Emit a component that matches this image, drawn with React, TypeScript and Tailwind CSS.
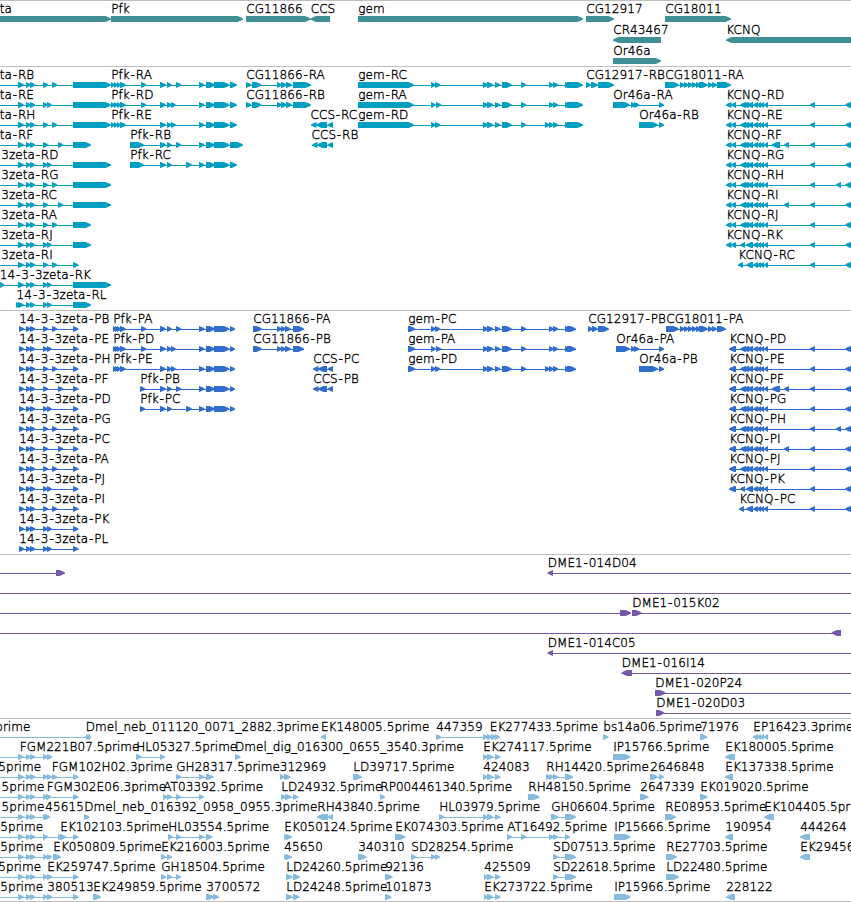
import React from 'react';

interface Feature {
    label?: string;
    labelX: number;
    exons: number[][];
    from: number;
    to: number;
    reverse: boolean;
}

interface FeatureOptions {
    at?: number;
    from?: number;
    to?: number;
}

interface Track {
    name: string;
    className: string;
    rowClassName: string;
    rowHeight: number;
    rows: Feature[][];
}

// exons are written as "start-end start-end ..."
function build(label: string, exons: string, reverse: boolean, opts: FeatureOptions): Feature {
    const parsed = exons ? exons.split(' ').map((e) => e.split('-').map(Number)) : [];
    const from = opts.from ?? parsed[0][0];
    const to = opts.to ?? parsed[parsed.length - 1][1];
    return { label, labelX: opts.at ?? from, exons: parsed, from, to, reverse };
}

const fwd = (label: string, exons: string, opts: FeatureOptions = {}) => build(label, exons, false, opts);
const rev = (label: string, exons: string, opts: FeatureOptions = {}) => build(label, exons, true, opts);

const EDGE = 860;

/* shared exon groups */
const Z = '18-24 26-31 30-35.5';
const ZP = '19-24.5 26-31 30-35.5';
const PFK_END = '199-204.7 206-215 214-229.5';
const GEM_MID = '483-488.5 487-493.5 495-500.5 502-512 521-526.5';
const K = '740-746 743-749 747-753 753-758 757-761 760-764 764-768';
const K_SHORT = '746-753 753-758 757-761 760-764 764-768';
const K_END = '809.7-815 845-851';
const CG18 = '680-685 684-689 688-693 692-697 696-701 699-708 708-713 712-717';

const zeta = (label: string, at: number, exons: string) => fwd(label, `${Z} ${exons}`, { at, from: -5 });
const zetaP = (label: string, exons: string) => fwd(label, `${ZP} ${exons} 73-78.5`, { at: 19 });
const kcnq = (label: string, exons: string) => rev(label, exons, { to: EDGE });

const geneRows: Feature[][] = [
    [
        fwd('ta', '0-111', { at: -0.5 }),
        fwd('Pfk', '111-243'),
        fwd('CG11866', '246-310.5'),
        rev('CCS', '310.5-330'),
        fwd('gem', '358-583'),
        fwd('CG12917', '586-614'),
        fwd('CG18011', '665-731'),
    ],
    [rev('CR43467', '613-661'), rev('KCNQ', '726-860')],
    [fwd('Or46a', '613-661')],
];

const transcriptRows: Feature[][] = [
    [
        zeta('ta-RB', -0.5, '43-48.5 52-57.5 73-111'),
        fwd('Pfk-RA', `111-115 114-118 117-121 120-126 141-146.5 160-166 167-172 176-181.5 ${PFK_END} 230-237`),
        fwd('CG11866-RA', '246-251.5 252-261.5 277-282 281-287 286-292 293-311'),
        fwd('gem-RC', `358-414 431-436 435-440.5 ${GEM_MID} 549-554 553-558.5 565-570 567-583`),
        fwd('CG12917-RB', '586-591.5 591-598 598-614'),
        fwd('CG18011-RA', `665-679 ${CG18} 717-731`),
    ],
    [
        zeta('ta-RE', -0.5, '43-48 47-52 73-111'),
        fwd('Pfk-RD', `111-115 114-118 117-121 120-126 141-146.5 160-166 167-172 171-176 ${PFK_END} 230-237`),
        fwd('CG11866-RB', '246-251.5 252-261.5 277-282 281-287 286-292 293-311'),
        fwd('gem-RA', `358-414 431-436 436-441.5 ${GEM_MID} 549-554 553-558.5 565-570 567-583`),
        fwd('Or46a-RA', '613-630 631-636 634-639.5 659-664'),
        kcnq('KCNQ-RD', `726-731.5 731-736 ${K} ${K_END}`),
    ],
    [
        zeta('ta-RH', -0.5, '43-48.5 52-57.5 73-111'),
        fwd('Pfk-RE', `111-115 114-118 117-121 120-126 160-166 167-172 171-176 ${PFK_END} 230-237`),
        rev('CCS-RC', '311-316.5 316-327 327.5-333', { at: 310.3 }),
        fwd('gem-RD', `358-414 431-436 435-440.5 ${GEM_MID} 545-550 549-554 553-558.5 565-570 567-583`),
        fwd('Or46a-RB', '639-658 659-664'),
        kcnq('KCNQ-RE', `726-731.5 731-736 ${K} ${K_END}`),
    ],
    [
        zeta('ta-RF', -0.5, '43-48.5 58-63.5 73-91'),
        fwd('Pfk-RB', `130-144 160-166 167-172 176-181.5 ${PFK_END} 230-243`),
        rev('CCS-RB', '312-317.5 317-327 327.5-333', { at: 311.3 }),
        kcnq('KCNQ-RF', `726-731.5 731-736 ${K} 771.5-780 783.7-789 ${K_END}`),
    ],
    [
        zeta('3zeta-RD', 1, '43-48 47-52 73-111'),
        fwd('Pfk-RC', `130-144 160-166 167-172 186-192 ${PFK_END} 230-237`),
        kcnq('KCNQ-RG', `726-731.5 731-736 ${K} ${K_END}`),
    ],
    [
        zeta('3zeta-RG', 1, '43-48.5 52-57.5 73-111'),
        kcnq('KCNQ-RH', `726-731.5 731-736 ${K} 809.7-815 835.7-841 845-851`),
    ],
    [
        zeta('3zeta-RC', 1, '43-48.5 58-63.5 73-111'),
        kcnq('KCNQ-RI', `726-731.5 731-736 ${K} 783.7-789 ${K_END}`),
    ],
    [zeta('3zeta-RA', 1, '43-48.5 52-57.5 73-91'), kcnq('KCNQ-RJ', `726-731.5 731-736 ${K} ${K_END}`)],
    [
        zeta('3zeta-RJ', 1, '43-48 47-52 73-91'),
        kcnq('KCNQ-RK', `726-731.5 731-736 740-745 ${K_SHORT} ${K_END}`),
    ],
    [zeta('3zeta-RI', 1, '43-48.5 52-57.5 73-78.5'), kcnq('KCNQ-RC', `738-743 ${K_SHORT} ${K_END}`)],
    [fwd('14-3-3zeta-RK', `0-4.5 ${Z} 43-48 47-52 73-111`, { at: -0.5 })],
    [fwd('14-3-3zeta-RL', '16-20 18-24 26-31 30-35.5 43-48 47-52 73-91', { at: 16.3 })],
];

const cdsRows: Feature[][] = [
    [
        zetaP('14-3-3zeta-PB', '43-48.5 52-57.5'),
        fwd('Pfk-PA', `113-117 115-119 117-121 120-126 141-146.5 160-166 167-172 176-181.5 ${PFK_END} 230-235`),
        fwd('CG11866-PA', '253-262 277-282 281-286 285-291 293-304'),
        fwd('gem-PC', `408-415.5 431-436 435-440.5 ${GEM_MID} 549-554 553-558.5 565-570 567-576`),
        fwd('CG12917-PB', '588-593 592-598 598-609'),
        fwd('CG18011-PA', `666-679 ${CG18} 717-726`),
    ],
    [
        zetaP('14-3-3zeta-PE', '43-48 47-52'),
        fwd('Pfk-PD', `113-117 115-119 117-121 120-126 141-146.5 160-166 167-172 171-176 ${PFK_END} 230-235`),
        fwd('CG11866-PB', '253-262 277-282 281-286 285-291 293-304'),
        fwd('gem-PA', `408-415.5 431-436 436-441.5 ${GEM_MID} 549-554 553-558.5 565-570 567-576`),
        fwd('Or46a-PA', '616-630 631-636 634-639.5 659-664'),
        kcnq('KCNQ-PD', `729-736 ${K} ${K_END}`),
    ],
    [
        zetaP('14-3-3zeta-PH', '43-48.5 52-57.5'),
        fwd('Pfk-PE', `113-117 115-119 117-121 120-126 160-166 167-172 171-176 ${PFK_END} 230-235`),
        rev('CCS-PC', '313-318.5 318-327 327.5-333'),
        fwd('gem-PD', `408-415.5 431-436 435-440.5 ${GEM_MID} 545-550 549-554 553-558.5 565-570 567-576`),
        fwd('Or46a-PB', '639-658 659-664'),
        kcnq('KCNQ-PE', `729-736 ${K} ${K_END}`),
    ],
    [
        zetaP('14-3-3zeta-PF', '43-48.5 58-63.5'),
        fwd('Pfk-PB', `140-145.5 160-166 167-172 176-181.5 ${PFK_END} 230-235`),
        rev('CCS-PB', '313-318.5 318-327 327.5-333'),
        kcnq('KCNQ-PF', `729-736 ${K} 771.5-780 783.7-789 ${K_END}`),
    ],
    [
        zetaP('14-3-3zeta-PD', '43-48 47-52'),
        fwd('Pfk-PC', `140-145.5 160-166 167-172 186-192 ${PFK_END} 230-235`),
        kcnq('KCNQ-PG', `729-736 ${K} ${K_END}`),
    ],
    [zetaP('14-3-3zeta-PG', '43-48.5 52-57.5'), kcnq('KCNQ-PH', `729-736 ${K} 809.7-815 835.7-841 845-851`)],
    [zetaP('14-3-3zeta-PC', '43-48.5 58-63.5'), kcnq('KCNQ-PI', `729-736 ${K} 783.7-789 ${K_END}`)],
    [zetaP('14-3-3zeta-PA', '43-48.5 52-57.5'), kcnq('KCNQ-PJ', `729-736 ${K} ${K_END}`)],
    [zetaP('14-3-3zeta-PJ', '43-48 47-52'), kcnq('KCNQ-PK', `729-736 740-745 ${K_SHORT} ${K_END}`)],
    [zetaP('14-3-3zeta-PI', '43-48.5 52-57.5'), kcnq('KCNQ-PC', `739-744 ${K_SHORT} ${K_END}`)],
    [zetaP('14-3-3zeta-PK', '43-48 47-52')],
    [zetaP('14-3-3zeta-PL', '43-48 47-52')],
];

const cloneRows: Feature[][] = [
    [fwd('', '56-65', { from: -5 }), rev('DME1-014D04', '547.5-553', { to: EDGE })],
    [fwd('', '', { from: -5, to: EDGE })],
    [fwd('', '620-631', { from: -5 }), fwd('DME1-015K02', '632-641.5', { to: EDGE })],
    [rev('', '831.5-841', { from: -5 })],
    [rev('DME1-014C05', '547.5-553', { to: EDGE })],
    [rev('DME1-016I14', '621.5-632', { to: EDGE })],
    [fwd('DME1-020P24', '655-665.5', { to: EDGE })],
    [fwd('DME1-020D03', '656-664.5', { to: EDGE })],
];

const estRows: Feature[][] = [
    [
        fwd('prime', '86-91', { at: -5, from: -5 }),
        rev('Dmel_neb_011120_0071_2882.3prime', '85-90', { at: 85.5 }),
        rev('EK148005.5prime', '320.7-326'),
        fwd('447359', '436-441.5 483-488 487-492 491-496 495-500', { at: 436 }),
        fwd('EK277433.5prime', '491-496', { at: 489.5 }),
        fwd('bs14a06.5prime', '603-608.5'),
        fwd('71976', '700-707.5'),
        rev('EP16423.3prime', '753-758 757-761 760-764 764-768'),
    ],
    [
        zeta('', 0, '43-48 47-52'),
        fwd('FGM221B07.5prime', '47-52', { at: 19.5 }),
        fwd('HL05327.5prime', '136-142 160-165'),
        fwd('Dmel_dig_016300_0655_3540.3prime', '235-240.5', { at: 234.8 }),
        fwd('EK274117.5prime', '483-488 487-493.5 495-500.5'),
        fwd('IP15766.5prime', '613-630.5'),
        rev('EK180005.5prime', '725-735'),
    ],
    [
        zeta('5prime', -2, '43-48 47-52 73-78.5'),
        fwd('FGM102H02.3prime', '52-57.5', { at: 51.5 }),
        fwd('GH28317.5prime', '176-181.5 199-204.5 206-213.5'),
        fwd('312969', '280-285 284-290.5', { at: 279.5 }),
        fwd('LD39717.5prime', '353-362'),
        fwd('424083', '483-488 487-493.5 495-500.5'),
        fwd('RH14420.5prime', '546-551 549-554 553-558.5 565-573'),
        fwd('2646848', '650-658 659-664'),
        rev('EK137338.5prime', '725-733'),
    ],
    [
        zeta('5prime', 1.3, '43-48 46-51 73-78.5'),
        fwd('FGM302E06.3prime', '47-51', { at: 46.5 }),
        fwd('AT03392.5prime', '163-168 167-172 176-181.5 199-204'),
        fwd('LD24932.5prime', '281-286 285-291.5 293-298.5'),
        fwd('RP004461340.5prime', '380-385'),
        fwd('RH48150.5prime', '528-539.5'),
        fwd('2647339', '640-648.5'),
        fwd('EK019020.5prime', '700-707.5'),
    ],
    [
        zeta('5prime', 1.3, '43-48 45-50'),
        fwd('45615', '45-50'),
        fwd('Dmel_neb_016392_0958_0955.3prime', '84-89.5', { at: 84 }),
        rev('RH43840.5prime', '317-328 327.5-333'),
        fwd('HL03979.5prime', '439-444.5 483-488 487-493.5 495-500.5'),
        fwd('GH06604.5prime', '551-558.5 565-576'),
        fwd('RE08953.5prime', '665-676'),
        rev('EK104405.5prime', '764-774'),
    ],
    [
        zeta('5prime', 0, '43-48.5 58-63 60-66 73-78.5'),
        fwd('EK102103.5prime', '60-66'),
        fwd('HL03554.5prime', '168-173 176-181.5 199-204 206-212.5'),
        fwd('EK050124.5prime', '284-288 286-292'),
        fwd('EK074303.5prime', '395-405.5'),
        fwd('AT16492.5prime', '507-512.5 521-526.5 549-554 553-558.5 565-570'),
        fwd('IP15666.5prime', '614-630.5'),
        rev('190954', '725-733', { at: 725 }),
        rev('444264', '800-810'),
    ],
    [
        zeta('5prime', 0, '43-48 47-52'),
        fwd('EK050809.5prime', '53-61'),
        fwd('EK216003.5prime', '161-166 167-172'),
        fwd('45650', '284-288 286-292'),
        fwd('340310', '358-366.5'),
        fwd('SD28254.5prime', '411-416.5 431-436 435-440'),
        fwd('SD07513.5prime', '553-558.5 565-576'),
        fwd('RE27703.5prime', '666-677'),
        rev('EK29456', '800-810'),
    ],
    [
        zeta('5prime', -2, '43-48 47-52 73-78.5'),
        fwd('EK259747.5prime', '47-52'),
        fwd('GH18504.5prime', '161-166 167-172 176-181'),
        fwd('LD24260.5prime', '286-292.5 293-300'),
        fwd('92136', '385-392.5'),
        fwd('425509', '484-488 487-493.5 495-500.5'),
        fwd('SD22618.5prime', '553-558.5 565-576'),
        fwd('LD22480.5prime', '666-679'),
    ],
    [
        zeta('5prime', 0, '43-48 47-52 73-78.5'),
        fwd('380513', '47-52'),
        fwd('EK249859.5prime', '93-101'),
        fwd('3700572', '206-214 213-219'),
        fwd('LD24248.5prime', '286-292.5 293-299.5'),
        fwd('101873', '385-391.5'),
        fwd('EK273722.5prime', '484-488 487-493.5 495-500.5'),
        fwd('IP15966.5prime', '614-630.5'),
        rev('228122', '726-735'),
    ],
];

const tracks: Track[] = [
    { name: 'genes', className: 'h-[66px] text-[#3f8f94]', rowClassName: 'h-[21px]', rowHeight: 21, rows: geneRows },
    { name: 'transcripts', className: 'h-[244px] text-[#009fc1]', rowClassName: 'h-5', rowHeight: 20, rows: transcriptRows },
    { name: 'cds', className: 'h-[244px] text-[#316dce]', rowClassName: 'h-5', rowHeight: 20, rows: cdsRows },
    { name: 'clones', className: 'h-[164px] text-[#7658a8]', rowClassName: 'h-5', rowHeight: 20, rows: cloneRows },
    { name: 'ests', className: 'h-[184px] border-b text-[#87bbdd]', rowClassName: 'h-5', rowHeight: 20, rows: estRows },
];

const MID = 18;
const HALF = 3;

// bullet shaped head: shoulders, a knee, then the tip
function exonPoints([x0, x1]: number[], reverse: boolean) {
    const head = Math.min(x1 - x0, 5.5);
    const knee = head * 0.45;
    const dir = reverse ? -1 : 1;
    const tip = reverse ? x0 : x1;
    const tail = reverse ? x1 : x0;
    return [
        [tail, MID - HALF],
        [tip - dir * head, MID - HALF],
        [tip - dir * knee, MID - 1.8],
        [tip, MID - 0.3],
        [tip, MID + 0.3],
        [tip - dir * knee, MID + 1.8],
        [tip - dir * head, MID + HALF],
        [tail, MID + HALF],
    ]
        .map((p) => p.join(','))
        .join(' ');
}

// opens up digits and hyphens a little, glyph by glyph
function spacing(label: string) {
    let carry = 0;
    return label
        .split('')
        .map((ch) => {
            const dx = ch === '-' ? carry + 0.85 : carry;
            carry = ch === '-' ? 0.85 : /\d/.test(ch) ? 0.09 : 0;
            return dx.toFixed(2);
        })
        .join(' ');
}

function Glyph({ feature }: { feature: Feature }) {
    return (
        <g fill="currentColor">
            <rect x={feature.from} y={MID} width={feature.to - feature.from} height={1} />
            {feature.exons.map((exon, idx) => (
                <polygon key={idx} points={exonPoints(exon, feature.reverse)} />
            ))}
        </g>
    );
}

function Row({ features, track }: { features: Feature[]; track: Track }) {
    return (
        <svg width={851} height={track.rowHeight} className={`block shrink-0 overflow-visible ${track.rowClassName}`}>
            {features.map((feature, idx) => (
                <Glyph key={idx} feature={feature} />
            ))}
            {features.map((feature, idx) =>
                feature.label ? (
                    <text
                        key={idx}
                        x={feature.labelX + 0.3}
                        y={12}
                        dx={spacing(feature.label)}
                        className="fill-black stroke-black stroke-[0.35px] text-[12px] font-extralight"
                    >
                        {feature.label}
                    </text>
                ) : null
            )}
        </svg>
    );
}

export default function App() {
    return (
        <main className="flex h-[902px] w-[851px] flex-col overflow-hidden bg-white font-['DejaVu_Sans',sans-serif]">
            {tracks.map((track) => (
                <section key={track.name} className={`flex shrink-0 flex-col border-t border-[#bfbfbf] ${track.className}`}>
                    {track.rows.map((features, idx) => (
                        <Row key={idx} features={features} track={track} />
                    ))}
                </section>
            ))}
        </main>
    );
}
